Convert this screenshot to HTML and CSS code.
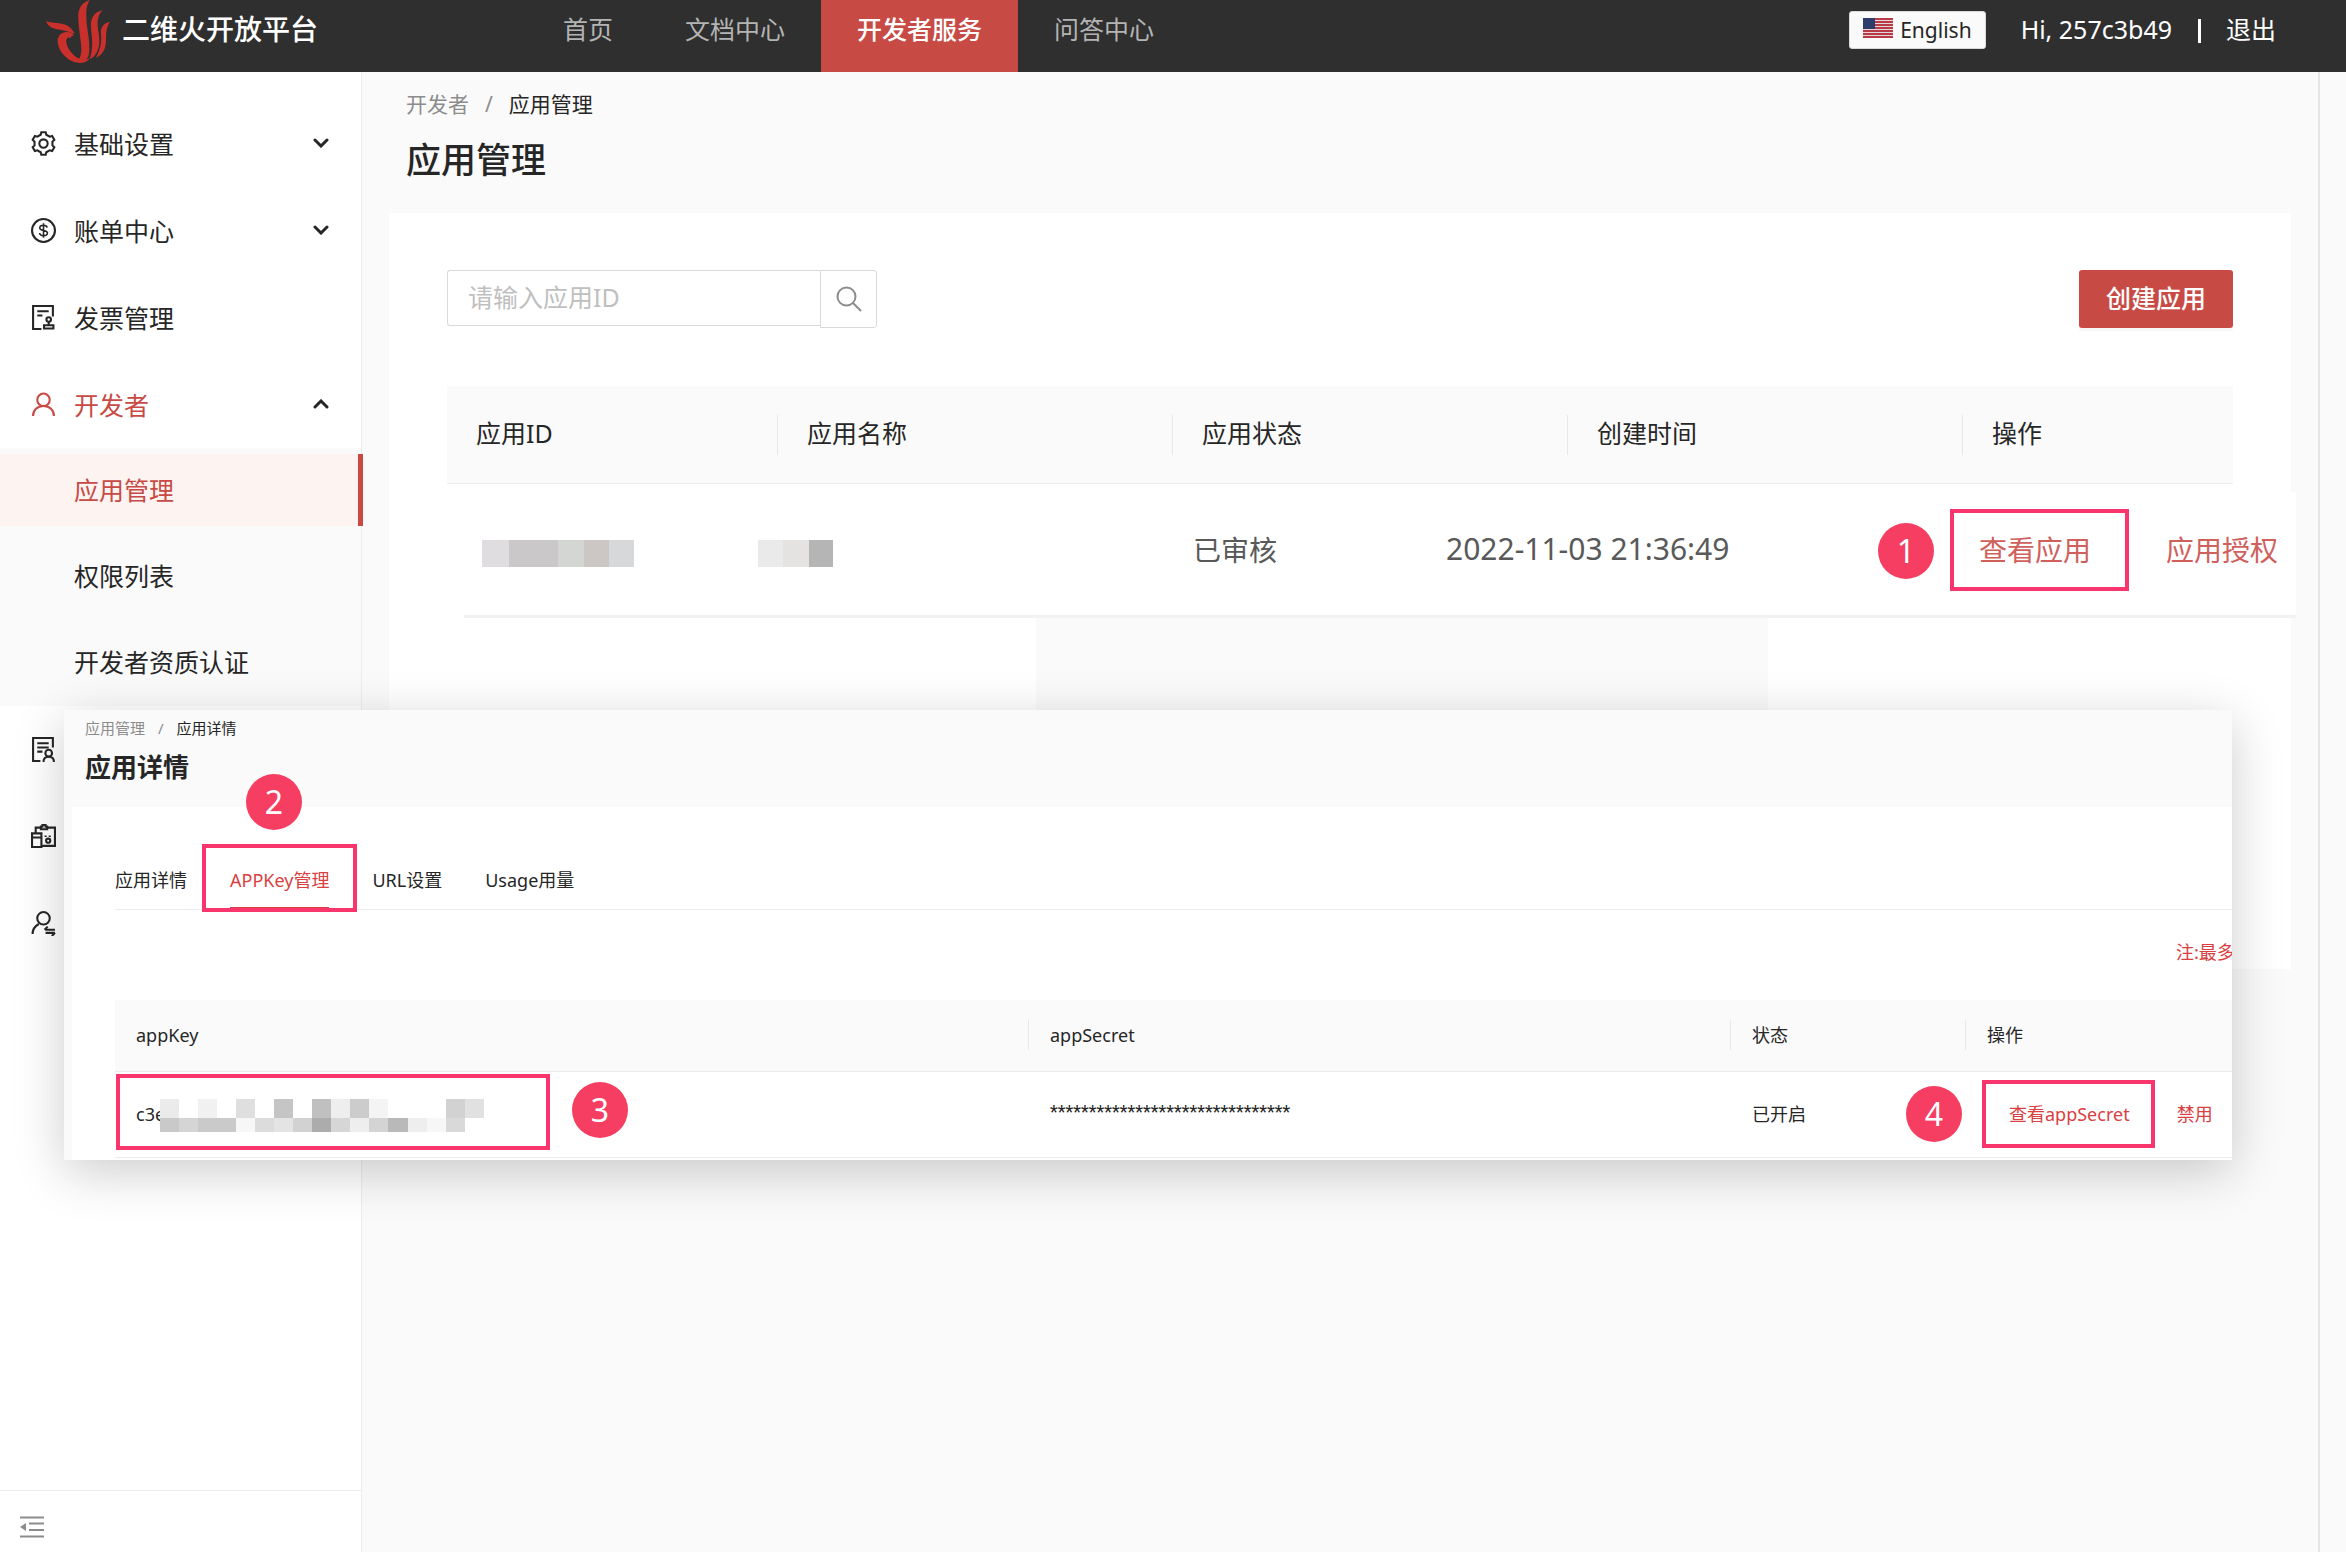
FILE: index.html
```html
<!DOCTYPE html>
<html lang="zh-CN">
<head>
    <meta charset="UTF-8">
    <meta name="viewport" content="width=device-width, initial-scale=1.0">
    <title>二维火开放平台 - 应用管理</title>
    <link rel="stylesheet" href="styles.css">
</head>
<body>
    <header class="topbar">
        <a class="brand" href="#">
            <svg class="brand-logo" viewBox="90 0 192 189" aria-hidden="true">
                <path d="M90 64 C106 70 124 67 144 73 C160 78 170 89 176 102 C158 95 142 90 124 88 C108 86 96 78 90 64Z"/>
                <path d="M168 99 C144 90 125 102 125 124 C125 152 156 189 192 189 C204 189 216 184 222 174 C212 178 202 180 194 178 C174 170 154 148 151 128 C149 116 156 109 165 115 C164 108 168 106 173 108 C172 104 170 101 168 99Z"/>
                <path d="M222 0 C194 8 185 30 187 56 C188 92 196 120 196 150 C196 164 192 174 186 181 C204 186 218 178 219 160 C224 124 211 86 211 48 C210 24 214 10 222 0Z"/>
                <path d="M260 30 C232 38 223 56 225 82 C227 112 234 140 221 178 C240 170 249 148 250 126 C251 100 243 84 245 62 C247 48 252 38 260 30Z"/>
                <path d="M282 65 C260 70 253 84 255 102 C257 126 254 148 240 173 C262 164 270 142 270 122 C270 102 270 84 282 65Z"/>
            </svg>
            <span>二维火开放平台</span>
        </a>
        <nav class="topnav">
            <a href="#">首页</a>
            <a href="#">文档中心</a>
            <a href="#" class="active">开发者服务</a>
            <a href="#">问答中心</a>
        </nav>
        <div class="user-area">
            <button class="lang-btn" type="button">
                <svg class="flag" viewBox="0 0 30 20" aria-hidden="true">
                    <rect width="30" height="20" fill="#e8d5d8"/>
                    <path d="M0 1h30M0 4h30M0 7h30M0 10h30M0 13h30M0 16h30M0 19h30" stroke="#b83a47" stroke-width="2"/>
                    <rect width="12" height="11" fill="#2c3d6b"/>
                </svg>
                English
            </button>
            <span class="hello">Hi, 257c3b49</span>
            <span class="bar"></span>
            <a href="#">退出</a>
        </div>
    </header>

    <div class="layout">
        <aside class="sidebar">
            <ul class="menu">
                <li>
                    <a href="#">
                        <svg class="icon" viewBox="0 0 24 24"><path d="M9.9 1.2h4.2l.6 2.4 3.2 1.9 2.4-.7 2.1 3.6-1.8 1.8v3.6l1.8 1.8-2.1 3.6-2.4-.7-3.2 1.9-.6 2.4H9.9l-.6-2.4-3.2-1.9-2.4.7-2.1-3.6 1.8-1.8v-3.6L1.6 8.4l2.1-3.6 2.4.7 3.2-1.9z"/><circle cx="12" cy="12" r="4"/></svg>
                        <span>基础设置</span>
                        <svg class="arrow" viewBox="0 0 16 10"><path d="M2 2l6 6 6-6"/></svg>
                    </a>
                </li>
                <li>
                    <a href="#">
                        <svg class="icon" viewBox="0 0 24 24"><circle cx="12" cy="12" r="11"/><path class="thin" d="M15.6 9.2C15.2 7.8 14 7 12 7c-2.2 0-3.6.9-3.6 2.5 0 3.4 7.4 1.5 7.4 4.9 0 1.7-1.6 2.6-3.8 2.6s-3.6-1-3.8-2.6M12 5v14"/></svg>
                        <span>账单中心</span>
                        <svg class="arrow" viewBox="0 0 16 10"><path d="M2 2l6 6 6-6"/></svg>
                    </a>
                </li>
                <li>
                    <a href="#">
                        <svg class="icon" viewBox="0 0 24 24"><path d="M21 11V1H2v22h8M6 6h11M6 10h5M12.5 22.5v-3h9v3zM17 19v-3"/><circle cx="17" cy="14" r="2.2"/></svg>
                        <span>发票管理</span>
                    </a>
                </li>
                <li>
                    <a href="#" class="open">
                        <svg class="icon" viewBox="0 0 24 24"><circle cx="12" cy="7.5" r="6"/><path d="M2 23c0-5.5 4-9.5 10-9.500S22 17.500 22 23"/></svg>
                        <span>开发者</span>
                        <svg class="arrow" viewBox="0 0 16 10"><path d="M2 8l6-6 6 6"/></svg>
                    </a>
                    <ul class="submenu">
                        <li><a href="#" class="selected">应用管理</a></li>
                        <li><a href="#">权限列表</a></li>
                        <li><a href="#">开发者资质认证</a></li>
                    </ul>
                </li>
                <li>
                    <a href="#" aria-label="资料">
                        <svg class="icon" viewBox="0 0 24 24"><path d="M21 10V1H2v22h7M6 6h11M6 10h11M6 14h5M12 24c0-3 2-5 5-5s5 2 5 5"/><circle cx="17" cy="15.5" r="3.2"/></svg>
                    </a>
                </li>
                <li>
                    <a href="#" aria-label="企业">
                        <svg class="icon" viewBox="0 0 24 24"><path d="M4.500 8V3.500h5M15 3.500h8V21H11M1 9h9v13H1zM1 13h9M9.500 5h6V2.500h-1.500V1h-3v1.500H9.500zM14 11v1.500M18 11v1.500"/><circle cx="16.5" cy="16" r="2"/></svg>
                    </a>
                </li>
                <li>
                    <a href="#" aria-label="账号切换">
                        <svg class="icon" viewBox="0 0 24 24"><circle cx="12" cy="7" r="6"/><path d="M1.500 22c0-4 2.500-7.500 6-9.500M14 18h9M16 15l-3 3M14 21h9M20 24l3-3"/></svg>
                    </a>
                </li>
            </ul>
            <div class="sidebar-foot">
                <button class="fold-btn" type="button" aria-label="收起菜单">
                    <svg viewBox="0 0 24 22"><path d="M0 1.500h24M9 7.500h15M9 14h15M0 20.500h24" fill="none" stroke="#8c8c8c" stroke-width="2"/><path d="M6 7v8l-6-4z" fill="#8c8c8c"/></svg>
                </button>
            </div>
        </aside>

        <main class="content">
            <nav class="crumbs">
                <a href="#">开发者</a><i>/</i><span>应用管理</span>
            </nav>
            <h1>应用管理</h1>

            <section class="card">
                <div class="toolbar">
                    <form class="search">
                        <input type="text" placeholder="请输入应用ID" aria-label="应用ID">
                        <button type="button" aria-label="搜索">
                            <svg viewBox="0 0 26 26"><circle cx="10.5" cy="10.5" r="9"/><path d="M17 17l8 8"/></svg>
                        </button>
                    </form>
                    <button class="create-btn" type="button">创建应用</button>
                </div>

                <table class="apps">
                    <thead>
                        <tr>
                            <th>应用ID</th>
                            <th>应用名称</th>
                            <th>应用状态</th>
                            <th>创建时间</th>
                            <th>操作</th>
                        </tr>
                    </thead>
                    <tbody>
                        <tr>
                            <td>
                                <svg class="mosaic" width="152" height="27" viewBox="0 0 152 27">
                                    <rect width="27" height="27" fill="#dfdddf"/>
                                    <rect x="27" width="49" height="27" fill="#cac8c8"/>
                                    <rect x="76" width="26" height="27" fill="#d3d6d3"/>
                                    <rect x="102" width="25" height="27" fill="#ccc7c4"/>
                                    <rect x="127" width="25" height="27" fill="#d6d8da"/>
                                </svg>
                            </td>
                            <td>
                                <svg class="mosaic" width="75" height="27" viewBox="0 0 75 27">
                                    <rect width="25" height="27" fill="#ebeaeb"/>
                                    <rect x="25" width="26" height="27" fill="#e4e3e1"/>
                                    <rect x="51" width="24" height="27" fill="#b5b5b5"/>
                                </svg>
                            </td>
                            <td>已审核</td>
                            <td class="time">2022-11-03 21:36:49</td>
                            <td>
                                <div class="ops">
                                    <span class="mark mark-view"><a href="#">查看应用</a><b class="num">1</b></span>
                                    <a href="#">应用授权</a>
                                </div>
                            </td>
                        </tr>
                    </tbody>
                </table>
                <div class="rest"><div></div></div>
            </section>
        </main>
    </div>

    <section class="detail">
        <nav class="crumbs">
            <a href="#">应用管理</a><i>/</i><span>应用详情</span>
        </nav>
        <h2>应用详情</h2>

        <div class="detail-body">
            <nav class="tabs">
                <a href="#">应用详情</a>
                <span class="mark mark-tab"><a href="#" class="on">APPKey管理</a><b class="num">2</b></span>
                <a href="#">URL设置</a>
                <a href="#">Usage用量</a>
            </nav>
            <p class="tip">注:最多</p>
            <table class="keys">
                <thead>
                    <tr>
                        <th class="col-key">appKey</th>
                        <th class="col-secret">appSecret</th>
                        <th class="col-state">状态</th>
                        <th>操作</th>
                    </tr>
                </thead>
                <tbody>
                    <tr>
                        <td>
                            <span class="mark mark-key">
                                c3e
                                <svg class="key-mosaic" width="324" height="33" viewBox="0 0 324 33">
                                    <rect x="0" width="19" height="19" fill="#ebebeb"/>
                                    <rect x="38" width="19" height="19" fill="#f1f1f1"/>
                                    <rect x="76" width="19" height="19" fill="#dfdfdf"/>
                                    <rect x="114" width="19" height="19" fill="#c5c5c5"/>
                                    <rect x="152" width="19" height="19" fill="#c0c0c0"/>
                                    <rect x="171" width="19" height="19" fill="#eeeeee"/>
                                    <rect x="190" width="19" height="19" fill="#cccccc"/>
                                    <rect x="209" width="19" height="19" fill="#f4f4f4"/>
                                    <rect x="286" width="19" height="19" fill="#d2d2d2"/>
                                    <rect x="305" width="19" height="19" fill="#e1e1e1"/>
                                    <rect x="0" y="19" width="19" height="14" fill="#c9c9c9"/>
                                    <rect x="19" y="19" width="19" height="14" fill="#d5d5d5"/>
                                    <rect x="38" y="19" width="38" height="14" fill="#cacaca"/>
                                    <rect x="76" y="19" width="19" height="14" fill="#f7f7f7"/>
                                    <rect x="95" y="19" width="19" height="14" fill="#dcdcdc"/>
                                    <rect x="114" y="19" width="19" height="14" fill="#e4e4e4"/>
                                    <rect x="133" y="19" width="19" height="14" fill="#d2d2d2"/>
                                    <rect x="152" y="19" width="19" height="14" fill="#acacac"/>
                                    <rect x="171" y="19" width="19" height="14" fill="#d6d6d6"/>
                                    <rect x="190" y="19" width="19" height="14" fill="#eeeeee"/>
                                    <rect x="209" y="19" width="19" height="14" fill="#d4d4d4"/>
                                    <rect x="228" y="19" width="20" height="14" fill="#b9b9b9"/>
                                    <rect x="248" y="19" width="19" height="14" fill="#eeeeee"/>
                                    <rect x="267" y="19" width="19" height="14" fill="#f7f7f7"/>
                                    <rect x="286" y="19" width="19" height="14" fill="#d9d9d9"/>
                                </svg>
                                <b class="num">3</b>
                            </span>
                        </td>
                        <td class="stars">*******************************</td>
                        <td>已开启</td>
                        <td>
                            <div class="ops">
                                <span class="mark mark-secret"><a href="#">查看appSecret</a><b class="num">4</b></span>
                                <a href="#">禁用</a>
                            </div>
                        </td>
                    </tr>
                </tbody>
            </table>
        </div>
    </section>
</body>
</html>
```

FILE: styles.css
```css
*,
*::after {
    box-sizing: border-box;
}
body {
    margin: 0;
    min-height: 100vh;
    display: flex;
    flex-direction: column;
    position: relative;
    background: #fafafa;
    color: #262626;
    font-family: "Noto Sans", "Noto Sans CJK SC", sans-serif;
    font-size: 25px;
}
a {
    color: inherit;
    text-decoration: none;
}
ul {
    list-style: none;
    margin: 0;
    padding: 0;
}
button,
input {
    font: inherit;
    color: inherit;
}

/* top bar */
.topbar {
    display: flex;
    height: 72px;
    background: #2f2f2f;
    color: #fff;
    line-height: 58px;
}
.brand {
    display: flex;
    width: 527px;
    padding-left: 46px;
    gap: 12px;
    font-size: 28px;
    font-weight: 500;
}
.brand-logo {
    width: 64px;
    height: 63px;
    fill: #c9302c;
}
.topnav {
    display: flex;
}
.topnav a {
    padding: 0 36px;
    color: #b4b4b4;
}
.topnav a.active {
    background: #c84a45;
    color: #fff;
    font-weight: 500;
}
.user-area {
    display: flex;
    margin-left: auto;
    padding-right: 70px;
}
.lang-btn {
    display: flex;
    align-items: center;
    gap: 7px;
    height: 38px;
    margin: 11px 35px 0 0;
    padding: 0 13px;
    border: 1px solid #d9d9d9;
    border-radius: 3px;
    background: #fafafa;
    color: #262626;
    font-size: 21px;
    line-height: 36px;
}
.flag {
    width: 30px;
    height: 20px;
    margin-bottom: 4px;
}
.bar {
    width: 3px;
    height: 24px;
    margin: 19px 25px 0 26px;
    background: #fff;
}

/* side menu */
.layout {
    display: flex;
    flex: 1;
}
.sidebar {
    display: flex;
    flex-direction: column;
    width: 362px;
    flex-shrink: 0;
    border-right: 1px solid #ececec;
    background: #fff;
}
.menu {
    padding-top: 28px;
}
.menu > li {
    padding-top: 7px;
}
.menu > li > a {
    display: flex;
    align-items: center;
    height: 72px;
    margin-bottom: 8px;
    padding: 0 32px 0 31px;
}
.icon {
    width: 25px;
    height: 25px;
    margin-right: 18px;
    fill: none;
    stroke: currentColor;
    stroke-width: 2;
}
.icon .thin {
    stroke-width: 1.5;
}
.arrow {
    width: 16px;
    height: 10px;
    margin-left: auto;
    fill: none;
    stroke: #262626;
    stroke-width: 3;
    stroke-linecap: round;
}
.menu .open {
    color: #c84a45;
}
.submenu {
    padding: 6px 0 8px;
    background: #fafafa;
}
.submenu a {
    display: block;
    height: 72px;
    margin-bottom: 14px;
    padding-left: 74px;
    line-height: 72px;
}
.submenu li:last-child a {
    margin-bottom: 0;
}
.submenu .selected {
    margin-right: -2px;
    border-right: 5px solid #c84a45;
    background: #fdf3f0;
    color: #c84a45;
}
.sidebar-foot {
    height: 62px;
    margin-top: auto;
    padding: 25px 20px;
    border-top: 1px solid #ececec;
}
.fold-btn {
    display: block;
    padding: 0;
    border: 0;
    background: none;
}
.fold-btn svg {
    display: block;
    width: 24px;
    height: 22px;
}

/* page content */
.content {
    flex: 1;
    min-width: 0;
    margin-right: 26px;
    padding: 16px 27px 0;
    border-right: 2px solid #e5e5e5;
}
.crumbs {
    display: flex;
    padding-left: 17px;
    font-size: 21px;
    line-height: 32px;
}
.crumbs a,
.crumbs i {
    color: #8c8c8c;
    font-style: normal;
}
.crumbs i {
    margin: 0 16px;
}
h1 {
    margin: 15px 0 29px 17px;
    font-size: 35px;
    line-height: 49px;
    font-weight: 500;
}
.card {
    background: #fff;
}
.toolbar {
    display: flex;
    justify-content: space-between;
    height: 173px;
    padding: 57px 58px 0;
}
.search {
    display: flex;
    align-items: flex-start;
}
.search input {
    width: 373px;
    height: 56px;
    padding: 0 20px 2px;
    border: 1px solid #d9d9d9;
    border-right: 0;
    border-radius: 3px 0 0 3px;
    background: #fff;
}
.search input::placeholder {
    color: #bfbfbf;
    opacity: 1;
}
.search button {
    width: 57px;
    height: 58px;
    padding: 0;
    border: 1px solid #d9d9d9;
    border-radius: 0 3px 3px 0;
    background: #fff;
}
.search svg {
    display: block;
    width: 26px;
    height: 26px;
    margin: 0 auto;
    fill: none;
    stroke: #8c8c8c;
    stroke-width: 2;
}
.create-btn {
    height: 58px;
    padding: 0 27px 4px;
    border: 0;
    border-radius: 3px;
    background: #c84a45;
    box-shadow: 0 3px 0 rgba(0, 0, 0, 0.03);
    color: #fff;
    font-weight: 500;
}

/* app list, head and row keep their own column widths */
.apps,
.apps thead,
.apps tbody {
    display: block;
}
.apps th,
.apps td {
    padding: 0;
    text-align: left;
}
.apps th {
    font-weight: 400;
}
.apps tr {
    display: grid;
    align-items: center;
}
.apps thead tr {
    grid-template-columns: 331fr 395fr 395fr 395fr 270fr;
    height: 98px;
    margin: 0 58px;
    border-bottom: 1px solid #ececec;
    background: #fafafa;
}
.apps th {
    height: 40px;
    padding-left: 29px;
    line-height: 36px;
    border-right: 1px solid #e8e8e8;
}
.apps th:last-child {
    border-right: 0;
}
.apps tbody tr {
    grid-template-columns: 276fr 435fr 253fr 533fr 335fr;
    height: 126px;
    margin: 8px -5px 0 75px;
    padding-bottom: 10px;
    border-bottom: 3px solid #f2f2f2;
    background: #fff;
    font-size: 28px;
}
.apps td {
    padding-left: 18px;
    color: #595959;
    white-space: nowrap;
}
.apps td.time {
    font-size: 30px;
}
.mosaic {
    display: block;
    margin-top: 10px;
}
.ops {
    display: flex;
}
.apps .ops {
    gap: 75px;
    color: #d0605c;
}
.rest {
    display: grid;
    grid-template-columns: 647fr 732fr 523fr;
    height: 351px;
}
.rest div {
    grid-column: 2;
    background: #fafafa;
}

/* numbered marks */
.mark {
    position: relative;
}
.mark::after {
    content: "";
    position: absolute;
    border: 4px solid #f8366d;
}
.num {
    position: absolute;
    width: 56px;
    height: 56px;
    border-radius: 50%;
    background: #f53e61;
    color: #fff;
    font-size: 32px;
    font-weight: 400;
    line-height: 56px;
    text-align: center;
}
.mark-view::after {
    inset: -20px -38px -22px -29px;
}
.mark-view .num {
    left: -101px;
    top: -6px;
}
.mark-tab::after {
    inset: 6px -28px -3px -28px;
}
.mark-tab .num {
    left: 16px;
    top: -64px;
}
.mark-key::after {
    width: 434px;
    height: 76px;
    left: -20px;
    top: -28px;
}
.mark-key .num {
    left: 436px;
    top: -20px;
}
.mark-secret::after {
    inset: -20px -25px -20px -27px;
}
.mark-secret .num {
    left: -103px;
    top: -14px;
}

/* app detail window */
.detail {
    position: absolute;
    top: 710px;
    left: 64px;
    right: 114px;
    height: 450px;
    padding: 5px 0 0 8px;
    background: #fafafa;
    box-shadow: 0 12px 48px rgba(0, 0, 0, 0.2);
    font-size: 18px;
}
.detail .crumbs {
    padding-left: 13px;
    font-size: 15px;
    line-height: 26px;
}
.detail .crumbs i {
    margin: 0 13px;
}
.detail h2 {
    margin: 8px 0 22px 13px;
    font-size: 26px;
    line-height: 36px;
    font-weight: 700;
}
.detail-body {
    height: 353px;
    padding-left: 43px;
    background: #fff;
}
.tabs {
    display: flex;
    height: 103px;
    padding-top: 31px;
    gap: 43px;
    border-bottom: 1px solid #ececec;
    line-height: 84px;
}
.tabs > a,
.tabs .on {
    display: block;
    height: 71px;
}
.tabs .on {
    border-bottom: 2px solid #d9403f;
}
.tabs .on,
.tip,
.keys a {
    color: #d9403f;
}
.tip {
    width: 56px;
    margin: 0 0 0 auto;
    padding: 30px 0 36px;
    overflow: hidden;
    line-height: 24px;
    white-space: nowrap;
}
.keys {
    width: 100%;
    table-layout: fixed;
    border-collapse: collapse;
}
.keys th,
.keys td {
    height: 71px;
    padding: 0 0 0 22px;
    border-bottom: 1px solid #ececec;
    line-height: 28px;
    font-weight: 400;
    text-align: left;
    white-space: nowrap;
}
.keys th {
    background: linear-gradient(#e8e8e8, #e8e8e8) 0 50% / 1px 30px no-repeat #fafafa;
}
.keys th:first-child {
    background: #fafafa;
}
.keys th:first-child,
.keys td:first-child {
    padding-left: 21px;
}
.keys td {
    height: 86px;
}
.col-key {
    width: 913px;
}
.col-secret {
    width: 702px;
}
.col-state {
    width: 235px;
}
.key-mosaic {
    position: absolute;
    left: 24px;
    top: -3px;
    background: #fff;
}
.keys .stars {
    padding-bottom: 5px;
    font-family: Roboto, sans-serif;
}
.keys .ops {
    gap: 47px;
}
.keys .mark-secret {
    margin-left: 22px;
}
```
